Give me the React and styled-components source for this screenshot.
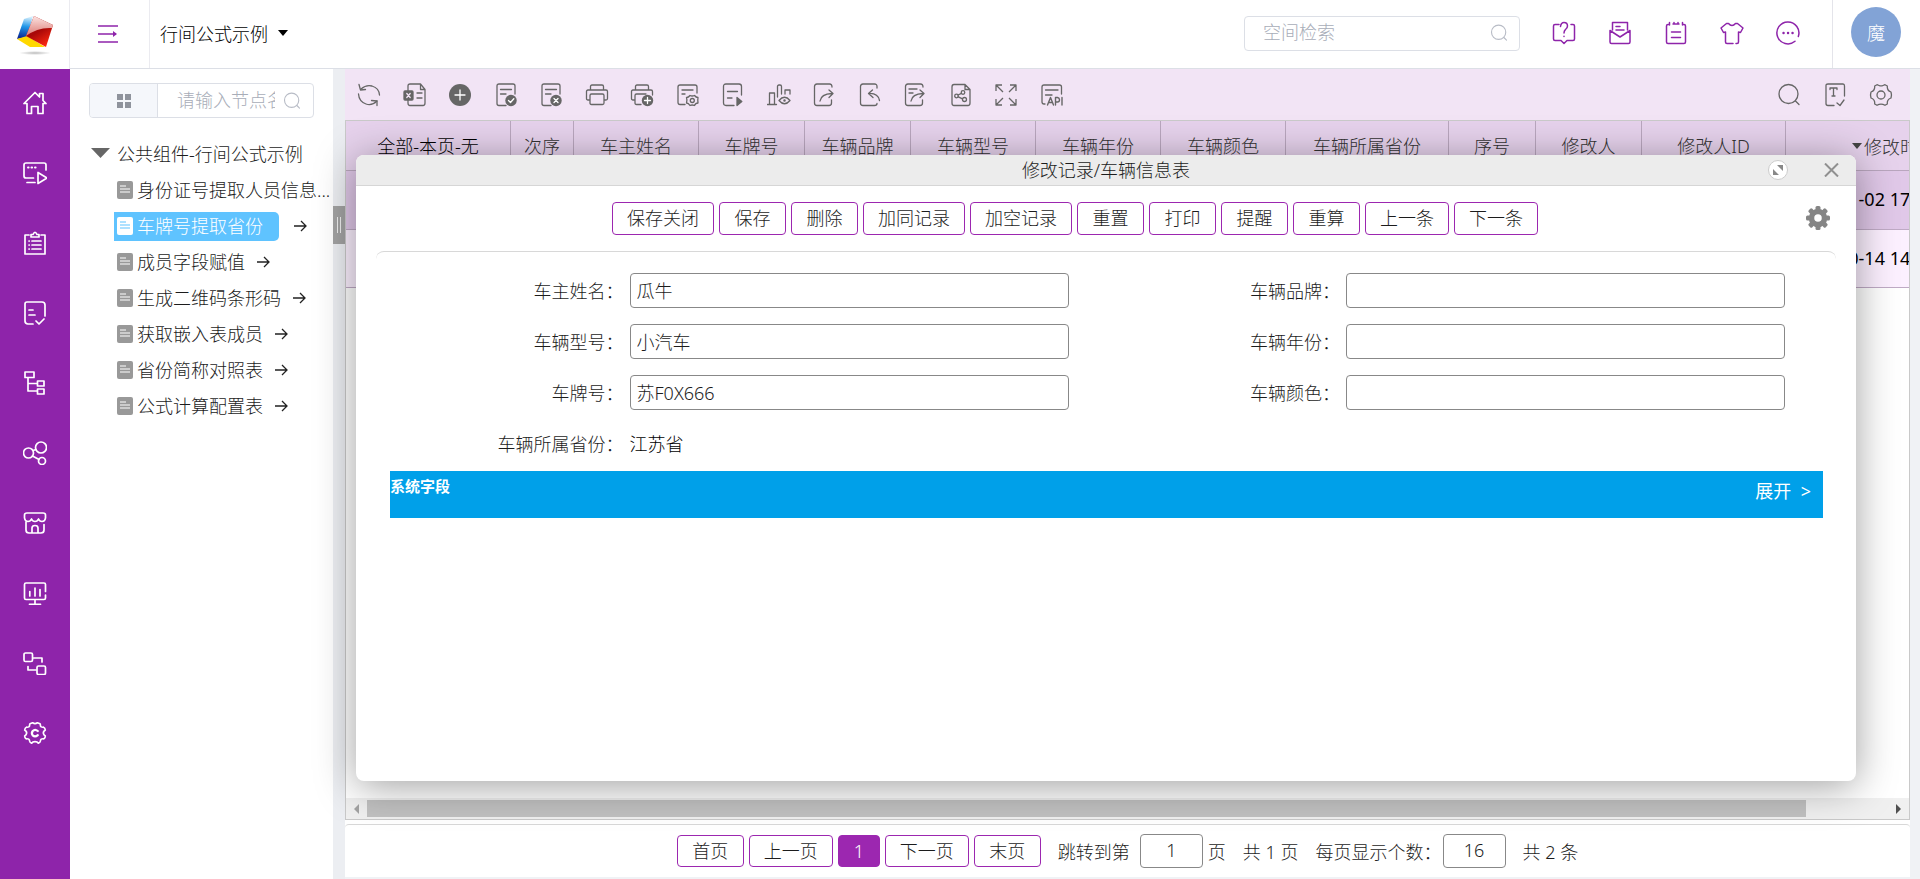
import React from "react";
import styled, { createGlobalStyle, css } from "styled-components";

const PURPLE = "#8e24aa";
const ACCENT = "#9c27b0";
const LINE = "#c9c9c9";

const GlobalStyle = createGlobalStyle`
  *, *::before, *::after { box-sizing: border-box; }
  body { margin: 0; background: #f0f2f5; overflow: hidden; }
  body, button, input {
    font-family: "Noto Sans", "Noto Sans CJK SC", sans-serif;
    font-size: 18px;
    font-weight: 300;
    color: #1c1c1c;
  }
  button { background: none; border: 0; padding: 0; cursor: pointer; }
  a { color: inherit; text-decoration: none; }
  svg { display: block; flex: none; }
`;

/* ---------- icons ---------- */

const Svg = ({ size = 24, sw = 1.5, children, ...rest }) => (
  <svg
    width={size}
    height={size}
    viewBox="0 0 24 24"
    fill="none"
    stroke="currentColor"
    strokeWidth={sw}
    strokeLinecap="round"
    strokeLinejoin="round"
    aria-hidden="true"
    {...rest}
  >
    {children}
  </svg>
);

const roundGear =
  "M9.6 1.8 Q12 3.6 14.4 1.8 L17 2.8 Q17.4 3 17.4 4.2 Q17.4 6.6 20.6 6.2 Q22 6.6 22.3 9 Q20 10.4 20.4 12.4 Q20.6 14 22.3 15 Q22 17.6 20.6 17.8 Q17.6 17.4 17.4 20 Q17.2 21.6 15.4 22.2 Q14.4 20.6 12 20.6 Q9.6 20.6 8.6 22.2 Q6.8 21.6 6.6 20 Q6.4 17.4 3.4 17.8 Q2 17.6 1.7 15 Q3.4 14 3.6 12.4 Q4 10.4 1.7 9 Q2 6.6 3.4 6.2 Q6.6 6.6 6.6 4.2 Q6.6 3 7 2.8 Z";

const ICONS = {
  home: (
    <path d="M1 12.5 L12 1.5 L16.5 6 V2.5 H20 V9.5 L23 12.5 M1 12.5 H4 V22.5 H8.5 V15.5 H15 V22.5 H20 V12.5 H23" />
  ),
  screenPlay: (
    <>
      <path d="M10.5 17 H3 Q1 17 1 15 V4 Q1 2 3 2 H21 Q23 2 23 4 V9 M4 21.5 H12" />
      <path d="M15 11.5 V22.5 L24 17 Z" />
      <path d="M5 6.5 h.6 M8.500 6.500 h.6 M12 6.500 h.6" strokeWidth="2" />
    </>
  ),
  clipboard: (
    <>
      <path d="M6 4 H2 V23 H22 V4 H18" />
      <path d="M8 6 V3.500 H10 Q12 -1 14 3.500 H16 V6 Z" />
      <path d="M6 10 h.3 M6 14 h.3 M6 18 h.3 M9 10 H18 M9 14 H18 M9 18 H18" />
    </>
  ),
  docCheck: (
    <>
      <path d="M10 23 H5 Q2 23 2 20 V3 Q2 1 4 1 H19 Q22 1 22 4 V15" />
      <path d="M6 9 H10 M6 14 H12 M13 20 L16 23 L21 18" />
    </>
  ),
  tree: (
    <>
      <rect x="2" y="1" width="9" height="5.500" />
      <path d="M5 7 V20 H14 M5 12.500 H14" />
      <rect x="14.500" y="10" width="6.500" height="5" />
      <rect x="14.500" y="18" width="6.500" height="5" />
    </>
  ),
  nodes: (
    <>
      <circle cx="5.500" cy="12" r="5" />
      <circle cx="18" cy="6.500" r="5.500" />
      <circle cx="19" cy="20" r="3.500" />
      <path d="M10 9.500 L13 8.500 M9.500 15 L16 18.500" />
    </>
  ),
  shop: (
    <>
      <path d="M1.500 7 V4 Q1.500 2 4 2 H20 Q22.500 2 22.500 4 V7 Q22 10.500 19 10.500 Q16.500 10.500 15.500 8 Q14.500 10.500 12 10.500 Q9.500 10.500 8.500 8 Q7.500 10.500 5 10.500 Q2 10.500 1.500 7 Z" />
      <path d="M3 11 V19 Q3 22 6 22 H18 Q21 22 21 19 V13.500 M9 22 V17 Q9 14.500 12 14.500 Q15 14.500 15 17 V22" />
    </>
  ),
  monitor: (
    <>
      <path d="M22.500 10.500 V3.500 Q22.500 2 21 2 H3 Q1.500 2 1.500 3.500 V17 Q1.500 18.500 3 18.500 H21 Q22.500 18.500 22.500 17 V14 M12 19 V23 M6.500 23.300 H17.500" />
      <path d="M6.800 10.500 V15 M12 7 V15 M17 8.500 V15" />
    </>
  ),
  link: (
    <>
      <rect x="1" y="2" width="8.500" height="8.500" rx="1.500" />
      <rect x="14" y="15" width="8.500" height="8.500" rx="1.500" />
      <path d="M10.500 7 H19 V11 M13 19 H5 V15.500" />
    </>
  ),
  cGear: (
    <>
      <path d={roundGear} />
      <path d="M14.800 10 Q12 7.600 9.700 10 Q8 12.200 9.700 14.400 Q12 16.600 14.800 14.200" strokeWidth="2.200" />
    </>
  ),
  refresh: (
    <>
      <path d="M4 6 Q9 1.500 15 3 Q22 5 22.500 12 M20 18 Q15 23 9 21 Q2 18.500 1.500 11" />
      <path d="M2 1.500 L3.500 7 L8.500 6.500 M14.500 17.500 L20 18 L20 22.500" />
    </>
  ),
  excel: (
    <>
      <path d="M5 8 V3 Q5 1 7 1 H17.500 L22 6.500 V20 Q22 22.500 20 22.500 H7 Q5 22.500 5 20 V16.500 M17.500 1.500 V6.500 H22 M14 10 H19 M14 15 H19" />
      <rect x="1" y="8" width="9" height="9" rx="1" fill="currentColor" />
      <path d="M3.800 10.500 L7.200 14.500 M7.200 10.500 L3.800 14.500" stroke="#f2e4f5" />
    </>
  ),
  add: (
    <>
      <circle cx="12" cy="12" r="11" fill="currentColor" stroke="none" />
      <path d="M7 12 H17 M12 7 V17" stroke="#fff" />
    </>
  ),
  docOk: (
    <>
      <path d="M12 22.500 H5 Q3 22.500 3 20.500 V3 Q3 1 5 1 H19 Q21 1 21 3 V11 M6.500 6.500 H17.500 M6.500 11 H12" />
      <circle cx="17" cy="17.500" r="5.700" fill="currentColor" stroke="none" />
      <path d="M14.500 17.500 L16.500 19.500 L19.800 15.800" stroke="#fff" />
    </>
  ),
  docNo: (
    <>
      <path d="M12 22.500 H5 Q3 22.500 3 20.500 V3 Q3 1 5 1 H19 Q21 1 21 3 V11 M6.500 6.500 H17.500 M6.500 11 H12" />
      <circle cx="17" cy="17.500" r="5.700" fill="currentColor" stroke="none" />
      <path d="M15 15.500 L19 19.500 M19 15.500 L15 19.500" stroke="#fff" />
    </>
  ),
  printer: (
    <path d="M5.500 6.500 V3.500 Q5.500 2 7 2 H17 Q18.500 2 18.500 3.500 V6.500 M5 17 H3 Q1.500 17 1.500 15.500 V8.500 Q1.500 7 3 7 H21 Q22.500 7 22.500 8.500 V15.500 Q22.500 17 21 17 H19 M5 12.500 Q5 11 6.500 11 H17.500 Q19 11 19 12.500 V20 Q19 21.500 17.500 21.500 H6.500 Q5 21.500 5 20 Z" />
  ),
  printAdd: (
    <>
      <path d="M5.500 6.500 V3.500 Q5.500 2 7 2 H17 Q18.500 2 18.500 3.500 V6.500 M5 17 H3 Q1.500 17 1.500 15.500 V8.500 Q1.500 7 3 7 H21 Q22.500 7 22.500 8.500 V12 M11 21.500 H6.500 Q5 21.500 5 20 V12.500 Q5 11 6.500 11 H16" />
      <circle cx="17.500" cy="17.500" r="5.700" fill="currentColor" stroke="none" />
      <path d="M14.500 17.500 H20.500 M17.500 14.500 V20.500" stroke="#fff" />
    </>
  ),
  docGear: (
    <>
      <path d="M9 21.500 H4 Q2 21.500 2 19.500 V4 Q2 2 4 2 H19 Q21 2 21 4 V10 M6 7 H17 M6 11 H9" />
      <path d="M14 12.500 Q16 13.500 18.500 12.500 Q20 14.500 22 14.500 Q21.500 17.500 22 20 Q19.500 20 18.500 22.500 Q16 21.500 14 22.500 Q12.500 20 10.500 20 Q11.500 17.500 10.500 14.500 Q12.500 14.500 14 12.500 Z" />
      <circle cx="16.300" cy="17.500" r="2" />
    </>
  ),
  docPlay: (
    <>
      <path d="M13 22.500 H5 Q2.500 22.500 2.500 20 V3.500 Q2.500 1 5 1 H18 Q20.500 1 20.500 3.500 V12 M6.500 8.500 H16.500 M6.500 15 H11" />
      <path d="M16 14.500 V22.500 L20.800 18.500 Z" fill="currentColor" />
    </>
  ),
  chartEye: (
    <>
      <path d="M.5 21.500 H9.500 M2.500 21 V10 H7.500 V21 M10.500 14 V3.500 Q10.500 2 12 2 H13 Q14.500 2 14.500 3.500 V11 M18 11 V7 H23 V11" />
      <path d="M12 17.500 Q17.500 11 23 17.500 Q17.500 24 12 17.500 Z" />
      <circle cx="17.500" cy="17.500" r=".6" />
    </>
  ),
  exportDoc: (
    <path d="M20 4 Q20 1 17.500 1 H5 Q2.500 1 2.500 3.500 V20 Q2.500 22.500 5 22.500 H17 Q19.500 22.500 19.500 20 V17 M8 18 Q9 11 20 10.500 M17 7 L21 10.500 L17 14.500" />
  ),
  importDoc: (
    <path d="M19 5 V3.500 Q19 1 16.500 1 H5 Q2.500 1 2.500 3.500 V20 Q2.500 22.500 5 22.500 H16.500 Q19 22.500 19 20.500 M11 10.500 Q20 10 21.500 17.500 M14.500 7 L10.500 10.500 L15 14.500" />
  ),
  shareDoc: (
    <path d="M20 4 Q20 1 17.500 1 H5 Q2.500 1 2.500 3.500 V20 Q2.500 22.500 5 22.500 H17 Q19.500 22.500 19.500 20 V17 M6 6 H14 M6 10 H10 M8 18 Q9 11 20 10.500 M17 7 L21 10.500 L17 14.500" />
  ),
  nodeDoc: (
    <>
      <path d="M16 1.500 H5 Q3 1.500 3 4 V20 Q3 22.500 5 22.500 H19 Q21 22.500 21 20 V6.500 L16 1.500 V6.500 H21" />
      <circle cx="7.500" cy="13" r="1.800" />
      <circle cx="14" cy="9.500" r="1.800" />
      <circle cx="15.500" cy="16.500" r="2" />
      <path d="M9 12 L12.500 10.300 M9.300 13.800 L13.500 15.800" />
    </>
  ),
  expand: (
    <path d="M2 8 V2 H8 M2.500 2.500 L9 9 M16 2 H22 V8 M21.500 2.500 L15 9 M2 16 V22 H8 M2.500 21.500 L9 15 M22 16 V22 H16 M21.500 21.500 L15 15" strokeLinecap="butt" />
  ),
  api: (
    <>
      <path d="M5 21 H4 Q2 21 2 19 V4 Q2 2 4 2 H19.500 Q21.500 2 21.500 4 V11 M5.500 7 H18 M5.500 12 H12" />
      <path d="M7.500 22 L10.500 14.500 L13.500 22 M8.500 19.500 H12.500 M15.500 22 V14.500 H17.500 Q19.500 15 19.500 16.800 Q19.500 19 17.500 19 H15.500 M22 14.500 V22" strokeWidth="1.400" />
    </>
  ),
  search: (
    <>
      <circle cx="11.500" cy="11" r="9.500" />
      <path d="M18.500 18 L22 21.500" />
    </>
  ),
  textDoc: (
    <>
      <path d="M11 22.500 H5 Q3 22.500 3 20.500 V2.500 Q3 1 5 1 H20 Q21.500 1 21.500 3 V13 M14 20 L17 22.500 L21 17" />
      <path d="M7 6.500 V5 H14 V6.500 M10.500 5 V13 M9 13 H12" />
    </>
  ),
  gear: (
    <>
      <path d="M8 1.700 L10 2.500 Q12 3.400 14 2.500 L16 1.700 L18.300 3 Q17.800 7.600 22 9 Q23 12 22 15 Q17.800 16.400 18.300 21 L16 22.300 Q12 19.800 8 22.300 L5.700 21 Q6.200 16.400 2 15 Q1 12 2 9 Q6.200 7.600 5.700 3 Z" />
      <circle cx="12" cy="12" r="4" />
    </>
  ),
  help: (
    <>
      <path d="M7 3.500 H3 Q1.500 3.500 1.500 5 V18 Q1.500 19.500 3 19.500 H9 L12 22.500 L15 19.500 H21 Q22.500 19.500 22.500 18 V5 Q22.500 3.500 21 3.500 H19" />
      <path d="M8.500 5.500 Q9 1.500 12 1.500 Q15.500 1.500 15.500 5 Q15.500 7 13.500 8.500 Q12 10 12 12 M12 15.200 v.3" />
    </>
  ),
  mail: (
    <path d="M4.500 9 V1.500 H19.500 V9 M2 9.500 V21 Q2 22.500 3.500 22.500 H20.500 Q22 22.500 22 21 V9.500 L12 16 L2 9.500 M8 5.500 H12 M8 9 H16" />
  ),
  note: (
    <path d="M5 3.500 H4 Q2.500 3.500 2.500 5 V21 Q2.500 22.500 4 22.500 H20 Q21.500 22.500 21.500 21 V5 Q21.500 3.500 20 3.500 H19 M5.500 1.500 V4 M10 1.500 V2.500 M14 1.500 V2.500 M18.500 1.500 V4 M9 3 H15 M7.500 11 H16.500 M7.500 16.500 H16.500" />
  ),
  shirt: (
    <path d="M16 22.500 H17 Q18.500 22.500 18.500 21 V11 L20.500 11.500 L23 7 L17.500 2.500 H15.500 Q12 6.500 8.500 2.500 H6.500 L1 7 L3.500 11.500 L5.500 11 V21 Q5.500 22.500 7 22.500 H13" />
  ),
  more: (
    <>
      <path d="M22.300 15.500 A11 11 0 1 0 19 20.300" />
      <path d="M7.500 12 h.1 M12 12 h.1 M16.500 12 h.1" strokeWidth="2.400" />
    </>
  ),
};

const Icon = ({ name, size, sw }) => (
  <Svg size={size} sw={sw}>
    {ICONS[name]}
  </Svg>
);

const Logo = () => (
  <svg width="38" height="40" viewBox="0 0 38 40" aria-hidden="true">
    <defs>
      <linearGradient id="lgBlue" x1="0.4" y1="0" x2="0.3" y2="1">
        <stop offset="0" stopColor="#d8f0fc" />
        <stop offset=".45" stopColor="#1e96e8" />
        <stop offset="1" stopColor="#0a1e8c" />
      </linearGradient>
      <linearGradient id="lgRed" x1="0.2" y1="0" x2="0.7" y2="1">
        <stop offset="0" stopColor="#b01010" />
        <stop offset=".5" stopColor="#a80808" />
        <stop offset="1" stopColor="#ff2a10" />
      </linearGradient>
      <linearGradient id="lgShine" x1="0" y1="0" x2="0" y2="1">
        <stop offset="0" stopColor="#fce4e2" />
        <stop offset="1" stopColor="#dc7a74" />
      </linearGradient>
      <radialGradient id="lgShadow">
        <stop offset="0" stopColor="#bbb" />
        <stop offset="1" stopColor="#fff" />
      </radialGradient>
    </defs>
    <ellipse cx="19" cy="38" rx="16" ry="2" fill="url(#lgShadow)" />
    <path d="M8 4 L17 1 L11 22 L1 24 Z" fill="url(#lgBlue)" />
    <path d="M1 24 L11 21 L29 32 L14 32 Z" fill="#ffd800" />
    <path d="M18 1 L37 10 L30 32 L10 21 Z" fill="url(#lgRed)" />
    <path d="M18 1 L37 10 L36 13 Q22 12 10 21 Z" fill="url(#lgShine)" />
  </svg>
);

const MenuToggleIcon = () => (
  <svg width="20" height="18" viewBox="0 0 20 18" fill="none" stroke={PURPLE} strokeWidth="1.300" aria-hidden="true">
    <path d="M0 1 H20 M0 9 H18 M0 17 H20" />
    <path d="M15 6 L19 9 L15 12 Z" fill={PURPLE} stroke="none" />
  </svg>
);

const Caret = ({ width = 10, height = 6, color = "#000" }) => (
  <svg width={width} height={height} viewBox="0 0 10 6" preserveAspectRatio="none" aria-hidden="true">
    <path d="M0 0 H10 L5 6 Z" fill={color} />
  </svg>
);

const ArrowIcon = () => (
  <svg width="13" height="12" viewBox="0 0 13 12" fill="none" stroke="#222" strokeWidth="1.300" aria-hidden="true">
    <path d="M0 6 H12 M7 1 L12 6 L7 11" />
  </svg>
);

const FileIcon = ({ selected }) => (
  <svg width="16" height="18" viewBox="0 0 16 18" aria-hidden="true">
    <rect width="16" height="18" rx="2" fill={selected ? "#fff" : "#999"} />
    <path
      d="M3 5 H9 M3 8 H13 M3 11 H13"
      stroke={selected ? "#5fc3ff" : "#fff"}
      strokeWidth="1.200"
    />
  </svg>
);

/* ---------- shell ---------- */

const Page = styled.div`
  min-height: 100vh;
  display: flex;
  flex-direction: column;
`;

const Header = styled.header`
  display: flex;
  height: 69px;
  background: #fff;
`;

const LogoCell = styled.a`
  display: flex;
  align-items: center;
  justify-content: center;
  width: 70px;
  border-right: 1px solid #ebebf0;
`;

const HeaderBar = styled.div`
  flex: 1;
  display: flex;
  align-items: center;
  padding-bottom: 2px;
  border-bottom: 1px solid #dcdfe6;
`;

const ToggleCell = styled.button`
  display: flex;
  align-items: center;
  justify-content: center;
  align-self: stretch;
  width: 80px;
  padding-right: 3px;
  margin-bottom: -2px;
  border-right: 1px solid #ebebf0;
`;

const SpaceButton = styled.button`
  display: flex;
  align-items: center;
  gap: 10px;
  padding-left: 10px;
  color: #000;
`;

const HeaderSearch = styled.label`
  display: flex;
  align-items: center;
  width: 276px;
  height: 35px;
  margin-left: auto;
  padding: 0 11px 0 18px;
  border: 1px solid #dcdfe6;
  border-radius: 4px;
  color: #b8bcc6;
`;

const BareInput = styled.input`
  flex: 1;
  min-width: 0;
  padding: 0 0 2px;
  border: 0;
  outline: 0;
  background: none;
  &::placeholder { color: #a8adb8; opacity: 1; }
`;

const HeaderActions = styled.div`
  display: flex;
  gap: 32px;
  padding: 0 32px;
  color: ${PURPLE};
`;

const IconButton = styled.button`
  display: flex;
  align-items: center;
  justify-content: center;
  color: inherit;
`;

const AvatarCell = styled.div`
  display: flex;
  align-items: center;
  align-self: stretch;
  margin-bottom: -2px;
  padding: 0 19px 4px 18px;
  border-left: 1px solid #e4e4ea;
`;

const Avatar = styled.button`
  width: 50px;
  height: 50px;
  border-radius: 50%;
  background: #82a3d6;
  color: #fff;
`;

const Body = styled.div`
  flex: 1;
  display: flex;
`;

const Sidebar = styled.nav`
  display: flex;
  flex-direction: column;
  width: 70px;
  background: ${PURPLE};
  color: #fff;
`;

const SideLink = styled.a`
  display: flex;
  align-items: center;
  justify-content: center;
  height: 70px;
  padding-bottom: 2px;
`;

/* ---------- tree panel ---------- */

const TreePanel = styled.aside`
  width: 263px;
  padding-top: 14px;
  background: #fff;
  overflow: hidden;
`;

const TreeSearch = styled.div`
  display: flex;
  height: 35px;
  margin: 0 19px;
  border: 1px solid #dcdfe6;
  border-radius: 4px;
  overflow: hidden;
`;

const GridButton = styled.button`
  flex: none;
  display: flex;
  align-items: center;
  justify-content: center;
  width: 68px;
  background: #f5f7fb;
  border-right: 1px solid #dcdfe6;
`;

const TreeSearchField = styled.label`
  flex: 1;
  min-width: 0;
  display: flex;
  align-items: center;
  gap: 8px;
  padding: 0 12px 0 19px;
  color: #b8bcc6;
`;

const TreeRoot = styled.button`
  display: flex;
  align-items: center;
  gap: 7px;
  height: 36px;
  margin: 17px 0 0 21px;
  white-space: nowrap;
`;

const TreeList = styled.ul`
  margin: 0;
  padding: 1px 0 0 44px;
  list-style: none;
`;

const TreeItem = styled.li`
  display: flex;
  align-items: center;
  gap: ${(p) => (p.$selected ? 15 : 12)}px;
  height: 36px;
`;

const TreeLink = styled.a`
  display: flex;
  align-items: center;
  gap: 4px;
  height: 29px;
  padding-left: 3px;
  line-height: 29px;
  white-space: nowrap;
  ${(p) =>
    p.$selected &&
    css`
      padding-right: 16px;
      border-radius: 0 5px 5px 0;
      background: #5fc3ff;
      color: #fff;
    `}
`;

const Splitter = styled.div`
  width: 12px;
  padding-top: 137px;
  background: #eceef2;
`;

const SplitHandle = styled.button`
  display: flex;
  align-items: center;
  justify-content: center;
  gap: 2px;
  width: 12px;
  height: 38px;
  background: #a2a2a2;
  &::before, &::after {
    content: "";
    width: 1px;
    height: 16px;
    background: #eee;
  }
`;

/* ---------- main panel ---------- */

const Main = styled.main`
  position: relative;
  flex: 1;
  min-width: 0;
  display: flex;
  flex-direction: column;
  margin: 0 10px 2px 0;
  background: #fff;
`;

const Toolbar = styled.div`
  display: flex;
  align-items: center;
  justify-content: space-between;
  height: 51px;
  padding: 1px 17px 0 12px;
  background: #f2e4f5;
  color: #666;
`;

const ToolGroup = styled.div`
  display: flex;
  justify-content: space-between;
  width: ${(p) => p.$width}px;
`;

const TableFrame = styled.div`
  flex: 1;
  display: flex;
  flex-direction: column;
  border: 1px solid ${LINE};
  overflow: hidden;
`;

const TableClip = styled.div`
  flex: 1;
  overflow: hidden;
`;

const Table = styled.table`
  width: 1657px;
  table-layout: fixed;
  border-collapse: separate;
  border-spacing: 0;
`;

const Th = styled.th`
  height: 50px;
  padding: 0 0 2px;
  border-right: 1px solid #b9a6be;
  border-bottom: 1px solid #b9a6be;
  background: #e6d2ec;
  font-weight: 300;
  white-space: nowrap;
  color: ${(p) => (p.$dark ? "#000" : "#333")};
`;

const SortLabel = styled.span`
  display: inline-flex;
  align-items: center;
  gap: 2px;
`;

const Td = styled.td`
  height: ${(p) => (p.$odd ? 59 : 58)}px;
  padding: 0 0 2px 5px;
  border-bottom: 1px solid #bfaac5;
  background: ${(p) => (p.$odd ? "#e0c8e8" : "#fcf0ff")};
  color: #000;
  font-weight: 400;
  white-space: nowrap;
`;

const ScrollBar = styled.div`
  display: flex;
  align-items: center;
  justify-content: space-between;
  height: 21px;
  padding: 0 8px;
  background: #f0f0f0;
`;

const ScrollTrack = styled.div`
  flex: 1;
  height: 17px;
  margin: 0 5px 0 8px;
`;

const ScrollThumb = styled.div`
  height: 17px;
  margin-right: 85px;
  background: #c1c1c1;
`;

const Pager = styled.footer`
  display: flex;
  align-items: center;
  justify-content: center;
  gap: 5px;
  height: 53px;
  margin-top: 4px;
  border-top: 1px solid #d8d8d8;
  border-radius: 4px;
  white-space: pre;
`;

const OutlineButton = styled.button`
  height: ${(p) => p.$height || 33}px;
  min-width: ${(p) => (p.$active ? 42 : 67)}px;
  padding: 0 14px;
  border: 1px solid ${ACCENT};
  border-radius: 4px;
  background: ${(p) => (p.$active ? ACCENT : "#fff")};
  color: ${(p) => (p.$active ? "#fff" : "#1c1c1c")};
  line-height: 28px;
  white-space: nowrap;
`;

const PagerField = styled.label`
  display: flex;
  align-items: center;
  gap: ${(p) => p.$gap}px;
  margin-left: 12px;
`;

const PagerText = styled.span`
  margin-left: 12px;
`;

const PagerInput = styled.input`
  width: 63px;
  height: 34px;
  padding: 0 0 2px;
  border: 1px solid #888;
  border-radius: 4px;
  text-align: center;
`;

/* ---------- record dialog ---------- */

const Dialog = styled.section`
  position: absolute;
  top: 86px;
  right: 54px;
  bottom: 96px;
  left: 11px;
  display: flex;
  flex-direction: column;
  border-radius: 8px;
  background: #fff;
  box-shadow: 0 5px 40px rgba(0, 0, 0, 0.38);
  overflow: hidden;
`;

const DialogHead = styled.header`
  display: grid;
  grid-template-columns: 1fr auto 1fr;
  align-items: center;
  height: 31px;
  border-bottom: 1px solid #d6d6d6;
  background: #ececec;
`;

const DialogTitle = styled.h2`
  grid-column: 2;
  margin: 0;
  font-size: 18px;
  font-weight: 300;
  line-height: 30px;
`;

const DialogControls = styled.div`
  display: flex;
  align-items: center;
  justify-content: flex-end;
  gap: 36px;
  padding-right: 17px;
  color: #888;
`;

const DialogBar = styled.div`
  position: relative;
  display: flex;
  align-items: center;
  justify-content: center;
  gap: 5px;
  height: 65px;
  margin: 0 20px;
  padding: 0 62px 1px 0;
`;

const SettingsButton = styled.button`
  position: absolute;
  right: 6px;
  color: #858585;
`;

const DialogBody = styled.form`
  flex: 1;
  margin: 0 20px;
  padding: 21px 13px 0 14px;
  border-top: 1px solid #d8d8d8;
  border-radius: 8px;
`;

const FormGrid = styled.div`
  display: grid;
  grid-template-columns: 1fr 1fr;
  row-gap: 16px;
`;

const Field = styled.div`
  display: grid;
  grid-template-columns: 1fr 439px 38px;
  align-items: center;
  height: 35px;
`;

const Label = styled.label`
  padding: 0 6px 2px 0;
  text-align: right;
`;

const TextInput = styled.input`
  height: 35px;
  padding: 0 6px 2px;
  border: 1px solid #888;
  border-radius: 4px;
`;

const Output = styled.output`
  padding-bottom: 2px;
  color: #000;
`;

const SystemBar = styled.div`
  display: flex;
  justify-content: space-between;
  height: 47px;
  margin-top: 10px;
  padding-right: 12px;
  background: #00a0e9;
  color: #fff;
`;

const SystemTitle = styled.h3`
  margin: 0;
  font-size: 15px;
  font-weight: 700;
  line-height: 30px;
`;

const ExpandButton = styled.button`
  align-self: flex-start;
  color: #fff;
  font-weight: 400;
  line-height: 40px;
  white-space: pre;
`;

/* ---------- data ---------- */

const SIDE = [
  ["home", "首页"],
  ["screenPlay", "演示"],
  ["clipboard", "任务"],
  ["docCheck", "审批"],
  ["tree", "组织"],
  ["nodes", "关系"],
  ["shop", "市场"],
  ["monitor", "报表"],
  ["link", "流程"],
  ["cGear", "配置"],
];

const TREE = ["身份证号提取人员信息...", "车牌号提取省份", "成员字段赋值", "生成二维码条形码", "获取嵌入表成员", "省份简称对照表", "公式计算配置表"];

const TOOLS = ["refresh", "excel", "add", "docOk", "docNo", "printer", "printAdd", "docGear", "docPlay", "chartEye", "exportDoc", "importDoc", "shareDoc", "nodeDoc", "expand", "api"];

const COLUMNS = [
  ["全部-本页-无", 165],
  ["次序", 63],
  ["车主姓名", 125],
  ["车牌号", 106],
  ["车辆品牌", 106],
  ["车辆型号", 125],
  ["车辆年份", 125],
  ["车辆颜色", 125],
  ["车辆所属省份", 163],
  ["序号", 87],
  ["修改人", 106],
  ["修改人ID", 144],
  ["修改时间", 217],
];

const ROWS = ["2023-11-02 17:24:36", "2023-10-14 14:08:52"];

const ACTIONS = ["保存关闭", "保存", "删除", "加同记录", "加空记录", "重置", "打印", "提醒", "重算", "上一条", "下一条"];

const FIELDS = [
  ["owner", "车主姓名", "瓜牛"],
  ["brand", "车辆品牌", ""],
  ["model", "车辆型号", "小汽车"],
  ["year", "车辆年份", ""],
  ["plate", "车牌号", "苏F0X666"],
  ["color", "车辆颜色", ""],
];

/* ---------- page ---------- */

const RecordDialog = () => (
  <Dialog role="dialog" aria-labelledby="dialog-title">
    <DialogHead>
      <DialogTitle id="dialog-title">修改记录/车辆信息表</DialogTitle>
      <DialogControls>
        <IconButton type="button" aria-label="最大化">
          <svg width="20" height="20" viewBox="0 0 20 20" aria-hidden="true">
            <circle cx="10" cy="10" r="9.500" fill="#fff" stroke="#ccc" />
            <path d="M9 5 H15 V11 Z M5 9 V15 H11 Z" fill="#888" />
          </svg>
        </IconButton>
        <IconButton type="button" aria-label="关闭">
          <svg width="15" height="14" viewBox="0 0 15 14" stroke="#909090" strokeWidth="2" aria-hidden="true">
            <path d="M1 .5 L14 13.500 M14 .5 L1 13.500" />
          </svg>
        </IconButton>
      </DialogControls>
    </DialogHead>
    <DialogBar>
      {ACTIONS.map((a) => (
        <OutlineButton type="button" key={a}>{a}</OutlineButton>
      ))}
      <SettingsButton type="button" aria-label="设置">
        <svg width="24" height="24" viewBox="-12 -12 24 24" aria-hidden="true">
          <circle r="6.500" fill="none" stroke="currentColor" strokeWidth="5.500" />
          {[0, 45, 90, 135, 180, 225, 270, 315].map((deg) => (
            <rect key={deg} x="-2.500" y="-12" width="5" height="5" rx="1.500" fill="currentColor" transform={`rotate(${deg})`} />
          ))}
        </svg>
      </SettingsButton>
    </DialogBar>
    <DialogBody>
      <FormGrid>
        {FIELDS.map(([id, label, value]) => (
          <Field key={id}>
            <Label htmlFor={id}>{label}：</Label>
            <TextInput id={id} defaultValue={value} />
          </Field>
        ))}
        <Field>
          <Label htmlFor="province">车辆所属省份：</Label>
          <Output id="province">江苏省</Output>
        </Field>
      </FormGrid>
      <SystemBar>
        <SystemTitle>系统字段</SystemTitle>
        <ExpandButton type="button">{"展开  >"}</ExpandButton>
      </SystemBar>
    </DialogBody>
  </Dialog>
);

export default function App() {
  return (
    <Page>
      <GlobalStyle />
      <Header>
        <LogoCell href="#" aria-label="主页"><Logo /></LogoCell>
        <HeaderBar>
          <ToggleCell type="button" aria-label="展开菜单"><MenuToggleIcon /></ToggleCell>
          <SpaceButton type="button">行间公式示例<Caret /></SpaceButton>
          <HeaderSearch>
            <BareInput placeholder="空间检索" aria-label="空间检索" />
            <Icon name="search" size={18} />
          </HeaderSearch>
          <HeaderActions>
            {["help", "mail", "note", "shirt", "more"].map((n) => (
              <IconButton type="button" key={n} aria-label={n}><Icon name={n} /></IconButton>
            ))}
          </HeaderActions>
          <AvatarCell><Avatar type="button">魔</Avatar></AvatarCell>
        </HeaderBar>
      </Header>
      <Body>
        <Sidebar>
          {SIDE.map(([icon, label]) => (
            <SideLink href="#" key={icon} aria-label={label}><Icon name={icon} sw={1.7} /></SideLink>
          ))}
        </Sidebar>
        <TreePanel>
          <TreeSearch>
            <GridButton type="button" aria-label="视图">
              <svg width="14" height="14" viewBox="0 0 14 14" fill="#8f939c" aria-hidden="true">
                <path d="M0 0 h6 v6 h-6 Z M8 0 h6 v6 h-6 Z M0 8 h6 v6 h-6 Z M8 8 h6 v6 h-6 Z" />
              </svg>
            </GridButton>
            <TreeSearchField>
              <BareInput placeholder="请输入节点名称" aria-label="请输入节点名称" />
              <Icon name="search" size={18} />
            </TreeSearchField>
          </TreeSearch>
          <TreeRoot type="button">
            <Caret width={19} height={10} color="#666" />
            公共组件-行间公式示例
          </TreeRoot>
          <TreeList>
            {TREE.map((name, i) => (
              <TreeItem key={name} $selected={i === 1}>
                <TreeLink href="#" $selected={i === 1}>
                  <FileIcon selected={i === 1} />
                  {name}
                </TreeLink>
                {i > 0 && <ArrowIcon />}
              </TreeItem>
            ))}
          </TreeList>
        </TreePanel>
        <Splitter><SplitHandle type="button" aria-label="调整宽度" /></Splitter>
        <Main>
          <Toolbar>
            <ToolGroup $width={707}>
              {TOOLS.map((n) => (
                <IconButton type="button" key={n} aria-label={n}><Icon name={n} sw={1.3} /></IconButton>
              ))}
            </ToolGroup>
            <ToolGroup $width={116}>
              {["search", "textDoc", "gear"].map((n) => (
                <IconButton type="button" key={n} aria-label={n}><Icon name={n} sw={1.3} /></IconButton>
              ))}
            </ToolGroup>
          </Toolbar>
          <TableFrame>
            <TableClip>
              <Table>
                <colgroup>
                  {COLUMNS.map(([name, width]) => <col key={name} width={width} />)}
                </colgroup>
                <thead>
                  <tr>
                    {COLUMNS.map(([name], i) => (
                      <Th key={name} $dark={i === 0}>
                        {name === "修改时间" ? <SortLabel><Caret color="#444" />{name}</SortLabel> : name}
                      </Th>
                    ))}
                  </tr>
                </thead>
                <tbody>
                  {ROWS.map((time, i) => (
                    <tr key={time}>
                      <Td $odd={i === 0} colSpan={12} />
                      <Td $odd={i === 0}>{time}</Td>
                    </tr>
                  ))}
                </tbody>
              </Table>
            </TableClip>
            <ScrollBar>
              <svg width="5" height="10" viewBox="0 0 5 10" aria-hidden="true"><path d="M5 0 V10 L0 5 Z" fill="#a3a3a3" /></svg>
              <ScrollTrack><ScrollThumb /></ScrollTrack>
              <svg width="5" height="10" viewBox="0 0 5 10" aria-hidden="true"><path d="M0 0 V10 L5 5 Z" fill="#505050" /></svg>
            </ScrollBar>
          </TableFrame>
          <Pager>
            <OutlineButton type="button" $height={32}>首页</OutlineButton>
            <OutlineButton type="button" $height={32}>上一页</OutlineButton>
            <OutlineButton type="button" $height={32} $active>1</OutlineButton>
            <OutlineButton type="button" $height={32}>下一页</OutlineButton>
            <OutlineButton type="button" $height={32}>末页</OutlineButton>
            <PagerField $gap={10}>跳转到第<PagerInput defaultValue="1" /></PagerField>
            <span>页</span>
            <PagerText>共 1 页</PagerText>
            <PagerField $gap={1}>每页显示个数：<PagerInput defaultValue="16" /></PagerField>
            <PagerText>共 2 条</PagerText>
          </Pager>
          <RecordDialog />
        </Main>
      </Body>
    </Page>
  );
}
